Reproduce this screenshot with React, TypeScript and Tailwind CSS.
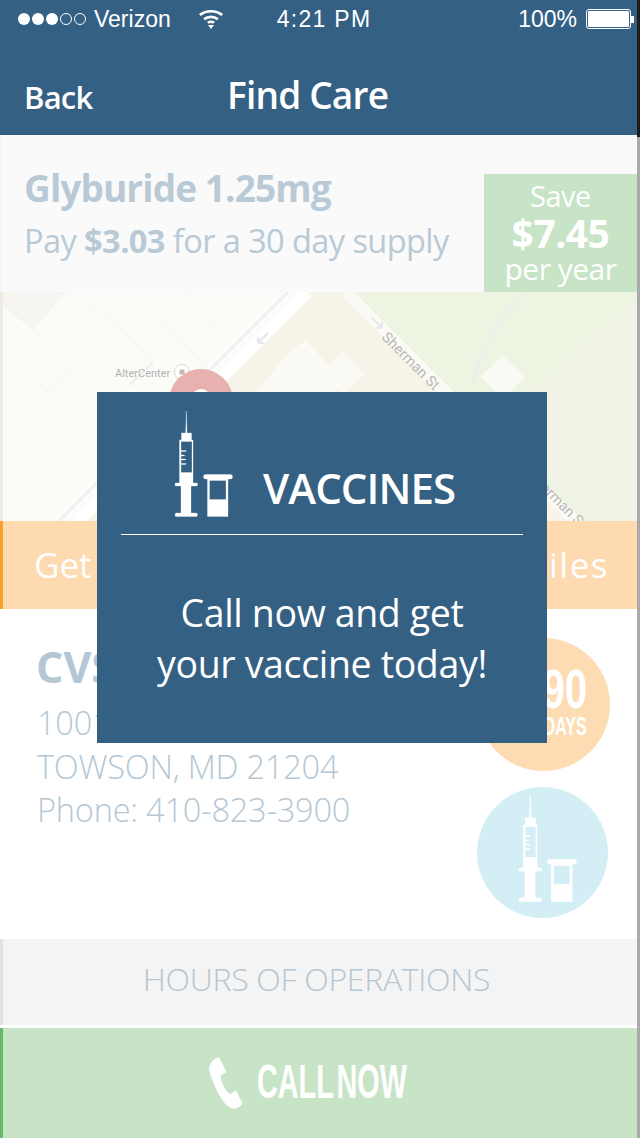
const bodyFont = "font-['Open_Sans','Noto_Sans',sans-serif]";

const VaccineIcon = ({ className }: { className: string }) => (
  <svg className={className} viewBox="77 19 60 106" fill="currentColor" aria-hidden="true">
    <path d="M89.3 19 L90 41 L88.7 41 Z" />
    <rect x="84.5" y="41" width="10" height="7" />
    <path
      fillRule="evenodd"
      d="M82.5 48 H96 V91 H82.5 Z M84 49.5 V80.5 H95 V49.5 Z"
    />
    <rect x="83.5" y="58.5" width="5.5" height="1" />
    <rect x="83.5" y="63" width="4" height="1" />
    <rect x="83.5" y="67" width="5" height="1" />
    <rect x="83.5" y="71.5" width="5.5" height="1" />
    <rect x="78" y="91" width="22.5" height="3" rx="1" />
    <rect x="84" y="94" width="10" height="28" />
    <rect x="78" y="121" width="22.5" height="3.5" rx="1.5" />
    <rect x="106.5" y="82.5" width="29" height="4.5" rx="2" />
    <path
      fillRule="evenodd"
      d="M110.5 87 H131 V124.5 H110.5 Z M112.5 88.5 V107.5 H129 V88.5 Z"
    />
  </svg>
);

const MapView = () => (
  <svg className="block h-[229px] w-full" viewBox="0 292 637 229" aria-hidden="true">
    <rect x="0" y="292" width="637" height="229" fill="#fbfbf7" />
    <path d="M3 292 L65 292 L33 330 L3 305 Z" fill="#f6f5f1" />
    <path d="M307 292 L346 292 L575 521 L77 521 Z" fill="#f6f3e8" />
    <path d="M353 292 L637 292 L637 521 L583 521 Z" fill="#edf4e1" />
    <path d="M637 300 L500 420 L590 521 L637 521 Z" fill="#f0f3e6" />
    <g stroke="#f4f4f1" strokeWidth="1" fill="none">
      <path d="M65 292 L33 330 L70 370 L0 442" />
      <path d="M3 305 L33 330 M0 349 L48 392" />
      <path d="M67 292 L115 322 L153 362 M138 300 L92 345 L133 385 M138 300 L207 367 M185 292 L230 345" />
    </g>
    <path d="M153 362 L130 385" stroke="#ececf0" strokeWidth="2" />
    <path d="M288 292 L58 522" stroke="#f0f0f4" strokeWidth="3" />
    <path d="M307 292 L77 522" stroke="#ffffff" strokeWidth="12" />
    <path d="M346 292 L575 521" stroke="#fbfaf7" strokeWidth="11" fill="none" />
    <path d="M268 333 L258 343 M258 343 L258 337 M258 343 L264 343" stroke="#e4e7eb" strokeWidth="2" fill="none" />
    <path d="M372 318 L382 328 M382 328 L382 322 M382 328 L376 328" stroke="#e4e7eb" strokeWidth="2" fill="none" />
    <path d="M525 292 L500 320 L478 364 L473 382" stroke="#eeeeea" strokeWidth="4" strokeLinecap="round" strokeLinejoin="round" fill="none" />
    <path d="M503 355 L526 377 L503 399 L480 377 Z" fill="#f9faf3" />
    <path d="M305 340 L345 382 L335 392 L255 392 L290 352 Z" fill="#faf9f3" />
    <path d="M342 351 L365 374 L343 395 L322 372 Z" fill="#faf9f3" />
    <rect x="0" y="292" width="3" height="229" fill="#efece2" />
    <text
      x="381"
      y="338"
      transform="rotate(45 381 338)"
      fontFamily="Roboto, sans-serif"
      fontSize="14.5"
      fill="#b8b8b8"
    >
      Sherman St
    </text>
    <text
      x="528"
      y="477"
      transform="rotate(45 528 477)"
      fontFamily="Roboto, sans-serif"
      fontSize="14.5"
      fill="#b8b8b8"
    >
      Sherman St
    </text>
    <text x="115" y="377" fontFamily="Roboto, sans-serif" fontSize="11" fill="#b4b4b4">
      AlterCenter
    </text>
    <circle cx="182" cy="372" r="7.5" fill="#ffffff" stroke="#dcdcdc" />
    <rect x="179.5" y="369.5" width="5" height="5" fill="#c0bcb4" />
    <circle cx="201" cy="401" r="32" fill="#e8b0ae" />
    <circle cx="201" cy="399" r="10" fill="#ffffff" />
  </svg>
);

export default function App() {
  return (
    <div className={`relative flex h-[1138px] w-[640px] overflow-hidden bg-white ${bodyFont}`}>
      <div className="w-[637px] shrink-0">
        {/* top bar */}
        <div className="h-[135px] bg-[#346084] text-white">
          <div className="relative flex h-[38px] items-center pl-[18px] pr-[3px] font-['Liberation_Sans',sans-serif] text-[23px]">
            <div className="flex items-center gap-[2px]">
              <span className="size-[12px] rounded-full bg-white" />
              <span className="size-[12px] rounded-full bg-white" />
              <span className="size-[12px] rounded-full bg-white" />
              <span className="size-[12px] rounded-full border border-white" />
              <span className="size-[12px] rounded-full border border-white" />
            </div>
            <span className="ml-[8px]">Verizon</span>
            <svg className="ml-[28px] h-[19px] w-[24px]" viewBox="0 0 24 19" fill="white" aria-hidden="true">
              <path d="M12 3 Q19 3 24 7 L22.3 9 Q17.5 5.6 12 5.6 Q6.5 5.6 1.7 9 L0 7 Q5 3 12 3 Z" transform="translate(0 -3)" />
              <path d="M12 5.5 Q16.5 5.5 19.8 8.2 L18 10.2 Q15.5 8.2 12 8.2 Q8.5 8.2 6 10.2 L4.2 8.2 Q7.5 5.5 12 5.5 Z" />
              <path d="M12 10.4 Q14.3 10.4 16 11.8 L14.2 13.8 Q13.2 13 12 13 Q10.8 13 9.8 13.8 L8 11.8 Q9.7 10.4 12 10.4 Z" />
              <path d="M9 15 L15 15 L12 19 Z" />
            </svg>
            <span className="ml-[54px] tracking-[1.3px]">4:21 PM</span>
            <span className="ml-auto">100%</span>
            <div className="ml-[9px] flex items-center">
              <div className="h-[20px] w-[45px] rounded-[3px] border border-white bg-white bg-clip-content p-[1px]" />
              <div className="h-[7px] w-[3px] bg-white" />
            </div>
          </div>
          <div className="flex items-baseline pl-[24px] pt-[30px]">
            <span className="w-[203px] text-[31px] font-semibold leading-[54px] tracking-[-0.8px]">Back</span>
            <span className="text-[37px] font-semibold leading-[54px] tracking-[-0.8px]">Find Care</span>
          </div>
        </div>

        {/* drug summary */}
        <div className="flex h-[157px] items-end border-l-[2px] border-[#f4f4f4] bg-[#fafafa]">
          <div className="flex-1 self-start pl-[22px] pt-[29px] text-[#b9cad6]">
            <div className="text-[37px] font-bold leading-[48px] tracking-[-0.9px]">Glyburide 1.25mg</div>
            <div className="pt-[7px] text-[32.6px] leading-[44px] tracking-[-0.6px]">
              Pay <b className="font-bold">$3.03</b> for a 30 day supply
            </div>
          </div>
          <div className="flex h-[118px] w-[153px] flex-col items-center bg-[#c8e4c6] pt-[4px] text-white">
            <span className="text-[29px] leading-[36px] tracking-[-0.5px]">Save</span>
            <span className="text-[39px] font-bold leading-[38px] tracking-[-0.5px]">$7.45</span>
            <span className="text-[30px] leading-[34px] tracking-[-0.5px]">per year</span>
          </div>
        </div>

        <MapView />

        {/* directions bar */}
        <div className="flex h-[88px] items-center justify-between border-l-[3px] border-[#f7a030] bg-[#fddab0] pl-[31px] pr-[28px] text-[35px] text-white">
          <span>Get</span>
          <span className="tracking-[1.5px]">Miles</span>
        </div>

        {/* pharmacy */}
        <div className="flex h-[330px] justify-between pl-[36px] pr-[27px]">
          <div className="pt-[31px] text-[#b5c7d4]">
            <div className="text-[43px] font-bold leading-[54px]">CVS</div>
            <div className="mt-[7px] pl-[1px] text-[32.5px] font-light leading-[43.5px] tracking-[-0.2px]">
              <div>1001</div>
              <div>TOWSON, MD 21204</div>
              <div>Phone: 410-823-3900</div>
            </div>
          </div>
          <div className="flex flex-col items-center pt-[29px]">
            <div className="flex size-[133px] flex-col items-end rounded-full bg-[#fddcb4] pr-[23px] pt-[27px] text-white">
              <span className="origin-right scale-x-[0.72] font-['Liberation_Sans',sans-serif] text-[56px] font-bold leading-[48px]">90</span>
              <span className="origin-right scale-x-[0.62] pt-[2px] font-['Liberation_Sans',sans-serif] text-[26px] font-bold leading-[22px]">DAYS</span>
            </div>
            <div className="mt-[16px] mr-[2px] flex size-[131px] items-center justify-center rounded-full bg-[#d3eff5] pb-[8px] pl-[10px]">
              <VaccineIcon className="h-[106px] w-[60px] stroke-white stroke-[0.7] text-white" />
            </div>
          </div>
        </div>

        {/* hours + call */}
        <div className="flex h-[86px] items-center justify-center border-l-[3px] border-[#e2e2e2] bg-[#f4f4f4] pb-[6px] pr-[7px] text-[32px] font-light tracking-[-0.3px] text-[#b5c7d4]">
          HOURS OF OPERATIONS
        </div>
        <div className="mt-[3px] flex h-[110px] items-center gap-[14px] border-l-[3px] border-[#66bb6a] bg-[#c8e4c6] pl-[206px] text-white">
          <svg className="h-[52px] w-[34px]" viewBox="0 0 34 52" fill="white" aria-hidden="true">
            <path d="M10 0 L17.5 15 L11.5 18.5 Q12 24 14.5 29 Q17.5 35 21.6 37 L27 33.3 L33.5 46.5 Q30 51 25.5 51.7 Q20 52 15.5 46 Q8 36 4 25 Q0 15 0 11 Q1 3 10 0 Z" />
          </svg>
          <span className="w-[150px] origin-left scale-x-[0.6] whitespace-nowrap pb-[2px] font-['Liberation_Sans',sans-serif] text-[48px] font-bold leading-none [word-spacing:-8px]">
            CALL NOW
          </span>
        </div>
      </div>

      {/* device edge */}
      <div className="flex w-[3px] flex-col">
        <div className="h-[137px] bg-[#1c1c1c]" />
        <div className="flex-1 bg-[#aaaaaa]" />
      </div>

      {/* vaccines popup */}
      <div className="absolute left-[97px] top-[392px] h-[351px] w-[450px] bg-[#346084] px-[24px] text-white">
        <div className="flex h-[143px] items-end border-b border-white pb-[17px] pl-[53px]">
          <VaccineIcon className="h-[106px] w-[60px] stroke-white stroke-[0.3]" />
          <span className="ml-[29px] pb-[2px] text-[42px] font-semibold leading-[54px] tracking-[-0.9px]">VACCINES</span>
        </div>
        <div className="pt-[52px] text-center text-[37.5px] leading-[51px] tracking-[-0.35px]">
          Call now and get
          <br />
          your vaccine today!
        </div>
      </div>
    </div>
  );
}
